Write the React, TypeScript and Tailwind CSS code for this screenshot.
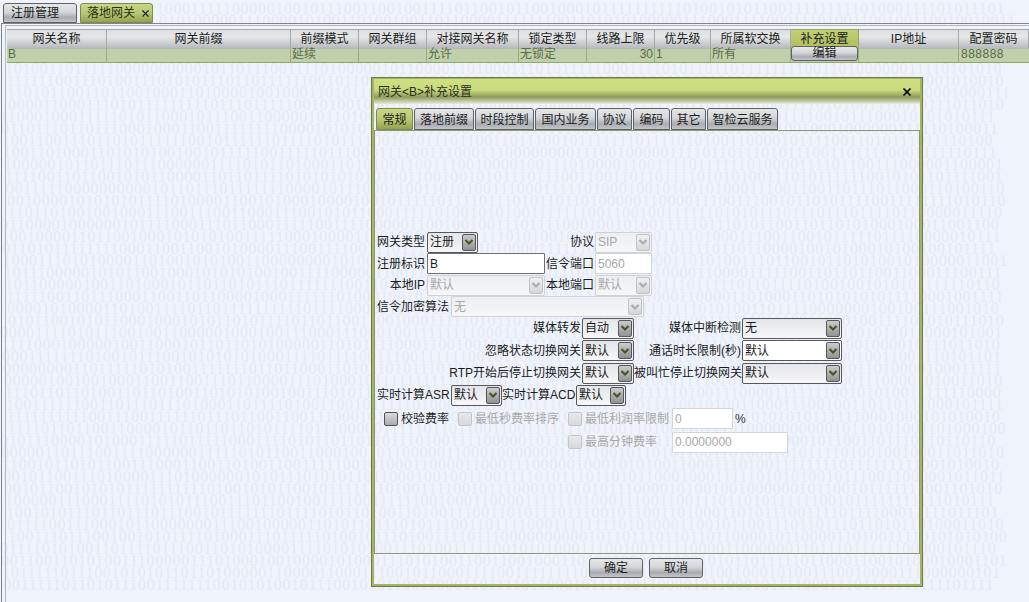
import { X } from "lucide-react"
import type { ReactNode } from "react"

// fixed seed so the digit wallpaper stays the same on every load
let seed = 20714
const nextBit = () => {
  seed = (seed * 1103 + 12345) % 65536
  return seed > 30000 ? "1" : "0"
}
const binaryRows = Array.from({ length: 49 }, (_, i) => ({
  digits: Array.from({ length: i < 2 ? 100 : 117 }, nextBit).join(""),
  // the two top rows start right of the tabs
  left: i < 2 ? 156 + i * 3 : (i * 37) % 9,
  // rows 2-4 lie behind the table
  hidden: i >= 2 && i <= 4,
}))

const columns = [
  "网关名称",
  "网关前缀",
  "前缀模式",
  "网关群组",
  "对接网关名称",
  "锁定类型",
  "线路上限",
  "优先级",
  "所属软交换",
  "补充设置",
  "IP地址",
  "配置密码",
]

const gridCols =
  "grid grid-cols-[100px_184px_68px_68px_92px_68px_68px_56px_80px_68px_100px_70px]"

const dialogTabs = [
  { name: "常规", w: "w-[37px]", active: true },
  { name: "落地前缀", w: "w-[60px]" },
  { name: "时段控制", w: "w-[59px]" },
  { name: "国内业务", w: "w-[61px]" },
  { name: "协议", w: "w-[35px]" },
  { name: "编码", w: "w-[37px]" },
  { name: "其它", w: "w-[35px]" },
  { name: "智检云服务", w: "w-[71px]" },
]

const greyBtn =
  "bg-[linear-gradient(#e6e7e9,#d4d6d9_45%,#a9acb1_75%,#c2c4c8)] border border-[#5f6368]"
const oliveTab =
  "bg-[linear-gradient(#c9d686,#b9c873_50%,#94a253)] border border-[#7d8a4c]"

function Label({ w, first, children }: { w: string; first?: boolean; children: ReactNode }) {
  return (
    <div className={`${w} ${first ? "pr-[2px]" : "pr-[1px]"} shrink-0 whitespace-nowrap text-right text-[#1c1c1c]`}>
      {children}
    </div>
  )
}

function Sel({
  w,
  value,
  disabled,
  white,
}: {
  w: string
  value: string
  disabled?: boolean
  white?: boolean
}) {
  const face = disabled
    ? "border-[#cfd2d6] bg-[linear-gradient(#eceef1,#f6f7f9)] text-[#a8a8a8]"
    : white
      ? "border-[#55585c] bg-white text-[#1c1c1c]"
      : "border-[#55585c] bg-[linear-gradient(#e4e5e8,#f7f7f8)] text-[#1c1c1c]"
  const arrow = disabled
    ? "border-[#bfc2c5] bg-[linear-gradient(#eef0f1,#d5d7da)]"
    : "border-[#55585c] bg-[linear-gradient(#c9cccc,#8f9393)]"
  return (
    <div className={`${w} ${face} flex h-[21px] shrink-0 items-center rounded-[2px] border pl-[2px] pr-[1px]`}>
      <span className="flex-1 whitespace-nowrap">{value}</span>
      <span className={`${arrow} flex h-[17px] w-[14px] items-center justify-center rounded-[2px] border`}>
        <svg width="10" height="8" viewBox="0 0 10 8" fill="none">
          <path
            d="M1.5 2 5 5.5 8.5 2"
            stroke={disabled ? "#a9acaf" : "#46541c"}
            strokeWidth="2"
          />
        </svg>
      </span>
    </div>
  )
}

function TextBox({ w, value, disabled }: { w: string; value: string; disabled?: boolean }) {
  return (
    <input
      readOnly
      value={value}
      className={`${w} h-[21px] shrink-0 rounded-[1px] border bg-white px-[2px] outline-none ${
        disabled ? "border-[#d3d5d8] text-[#a8a8a8]" : "border-[#6d7074] text-[#1c1c1c]"
      }`}
    />
  )
}

function Check({ disabled }: { disabled?: boolean }) {
  return (
    <span
      className={`h-[14px] w-[14px] shrink-0 rounded-[2px] border ${
        disabled
          ? "border-[#c4c6c9] bg-[linear-gradient(#e8e9eb,#d7d9dc)]"
          : "border-[#4f5256] bg-[linear-gradient(#d9dbde,#a9acb0)]"
      }`}
    />
  )
}

function Form() {
  return (
    <div className="flex flex-col pl-[2px]">
      <div className="flex h-[22px] items-center">
        <Label w="w-[50px]" first>网关类型</Label>
        <Sel w="w-[51px]" value="注册" />
        <Label w="w-[117px]">协议</Label>
        <Sel w="w-[57px]" value="SIP" disabled />
      </div>
      <div className="flex h-[21px] items-center">
        <Label w="w-[50px]" first>注册标识</Label>
        <TextBox w="w-[118px]" value="B" />
        <Label w="w-[50px]">信令端口</Label>
        <TextBox w="w-[57px]" value="5060" disabled />
      </div>
      <div className="flex h-[22px] items-center">
        <Label w="w-[50px]" first>本地IP</Label>
        <Sel w="w-[118px]" value="默认" disabled />
        <Label w="w-[50px]">本地端口</Label>
        <Sel w="w-[57px]" value="默认" disabled />
      </div>
      <div className="flex h-[21px] items-center">
        <Label w="w-[74px]" first>信令加密算法</Label>
        <Sel w="w-[193px]" value="无" disabled />
      </div>
      <div className="flex h-[22px] items-center">
        <Label w="w-[205px]">媒体转发</Label>
        <Sel w="w-[52px]" value="自动" />
        <Label w="w-[108px]">媒体中断检测</Label>
        <Sel w="w-[100px]" value="无" />
      </div>
      <div className="flex h-[23px] items-center">
        <Label w="w-[205px]">忽略状态切换网关</Label>
        <Sel w="w-[52px]" value="默认" />
        <Label w="w-[108px]">通话时长限制(秒)</Label>
        <Sel w="w-[100px]" value="默认" white />
      </div>
      <div className="flex h-[22px] items-center">
        <Label w="w-[205px]">RTP开始后停止切换网关</Label>
        <Sel w="w-[52px]" value="默认" />
        <Label w="w-[108px]">被叫忙停止切换网关</Label>
        <Sel w="w-[100px]" value="默认" />
      </div>
      <div className="flex h-[22px] items-center">
        <Label w="w-[74px]" first>实时计算ASR</Label>
        <Sel w="w-[51px]" value="默认" />
        <Label w="w-[74px]">实时计算ACD</Label>
        <Sel w="w-[50px]" value="默认" />
      </div>
      <div className="flex h-[25px] items-center pl-[7px]">
        <Check />
        <span className="ml-[3px] w-[57px] text-[#1c1c1c]">校验费率</span>
        <Check disabled />
        <span className="ml-[3px] w-[93px] text-[#a8a8a8]">最低秒费率排序</span>
        <Check disabled />
        <span className="ml-[3px] w-[87px] whitespace-nowrap text-[#a8a8a8]">最低利润率限制</span>
        <TextBox w="w-[61px]" value="0" disabled />
        <span className="ml-[2px] text-[#333]">%</span>
      </div>
      <div className="flex h-[22px] items-center pl-[191px]">
        <Check disabled />
        <span className="ml-[3px] w-[87px] text-[#a8a8a8]">最高分钟费率</span>
        <TextBox w="w-[116px]" value="0.0000000" disabled />
      </div>
    </div>
  )
}

function Dialog() {
  return (
    <div className="absolute left-[371px] top-[77px] flex h-[510px] w-[552px] flex-col border border-[#6d7a44] shadow-[inset_0_0_0_2px_#a6b564]">
      <div className="mx-[2px] mt-[1px] flex h-[25px] shrink-0 items-center justify-between bg-[linear-gradient(#cfe084,#c8da7c_45%,#8f9a5c_72%,#e6ebd8)] pl-[4px] pr-[7px] text-[#2b2e20]">
        <span>网关{"<B>"}补充设置</span>
        <X size={12} strokeWidth={3.5} className="text-black" />
      </div>
      <div className="ml-[4px] mt-[4px] flex h-[22px] shrink-0 gap-[1px]">
        {dialogTabs.map((t) => (
          <div
            key={t.name}
            className={`${t.w} ${
              t.active ? oliveTab : greyBtn
            } flex items-center justify-center rounded-t-[3px] pt-[1px] text-[#1c1c1c]`}
          >
            {t.name}
          </div>
        ))}
      </div>
      <div className="mx-[2px] flex h-[424px] shrink-0 flex-col justify-center border border-[#8b9870]">
        <Form />
      </div>
      <div className="flex flex-1 items-center justify-center gap-[6px] pb-[4px] pr-[2px]">
        <button className={`${greyBtn} h-[20px] w-[54px] rounded-[3px] text-[#1c1c1c]`}>确定</button>
        <button className={`${greyBtn} h-[20px] w-[54px] rounded-[3px] text-[#1c1c1c]`}>取消</button>
      </div>
    </div>
  )
}

export default function App() {
  return (
    <div className="relative h-[602px] w-[1029px] overflow-hidden bg-[#eff4fc] font-['Liberation_Sans','Noto_Sans_CJK_SC',sans-serif] text-[12px]">
      <div className="absolute inset-0 select-none pt-[3px] font-['Liberation_Serif',serif] text-[16px] leading-[12px] tracking-[0.7px] text-[#e4e9f3]">
        {binaryRows.map((r, i) => (
          <div key={i} style={{ paddingLeft: r.left }} className="h-[12px] whitespace-nowrap">
            {r.hidden ? null : r.digits}
          </div>
        ))}
      </div>

      <div className="relative flex h-full flex-col">
        <div className="flex h-[23px] shrink-0 gap-[3px] pl-[3px] pt-[3px]">
          <div className={`${greyBtn} flex w-[74px] items-center rounded-t-[3px] pl-[7px] text-[#1c1c1c]`}>
            注册管理
          </div>
          <div className={`${oliveTab} flex w-[73px] items-center gap-[5px] rounded-t-[3px] pl-[6px] text-[#2a3012]`}>
            落地网关
            <X size={11} strokeWidth={2.5} className="text-[#222]" />
          </div>
        </div>

        <div className="ml-[1px] flex-1 border-l border-t border-[#7f8488]">
          <div className="ml-[3px] mt-[1px] h-full border-l border-t border-[#b5b9bd] pl-[1px] pt-[3px]">
            <div className={`${gridCols} h-[17px]`}>
              {columns.map((c) => (
                <div
                  key={c}
                  className={`flex items-center justify-center whitespace-nowrap border-r border-t pb-[1px] text-[#1c1c1c] ${
                    c === "补充设置"
                      ? "border-[#98a65a] bg-[linear-gradient(#c2cf74,#aebd5f)]"
                      : "border-[#a5a9ae] bg-[linear-gradient(#dcdee1,#e6e7e9_35%,#b3b6bb)]"
                  }`}
                >
                  {c}
                </div>
              ))}
            </div>
            <div className={`${gridCols} h-[17px] border-b border-[#93a567] bg-[#bfd0ab] leading-[16px] text-[#5c6b47]`}>
              <div className="border-r border-[#9bad78] pl-[1px]">B</div>
              <div className="border-r border-[#9bad78]" />
              <div className="border-r border-[#9bad78] pl-[1px]">延续</div>
              <div className="border-r border-[#9bad78]" />
              <div className="border-r border-[#9bad78] pl-[1px]">允许</div>
              <div className="border-r border-[#9bad78] pl-[1px]">无锁定</div>
              <div className="border-r border-[#9bad78] pr-[1px] text-right">30</div>
              <div className="border-r border-[#9bad78] pl-[1px]">1</div>
              <div className="border-r border-[#9bad78] pl-[1px]">所有</div>
              <div className="border-r border-[#9bad78]">
                <button className={`${greyBtn} block h-[15px] w-[67px] rounded-[3px] leading-[13px] text-[#1c1c1c]`}>
                  编辑
                </button>
              </div>
              <div className="border-r border-[#9bad78]" />
              <div className="pl-[2px] tracking-[0.5px]">888888</div>
            </div>
          </div>
        </div>
      </div>

      <Dialog />
    </div>
  )
}
